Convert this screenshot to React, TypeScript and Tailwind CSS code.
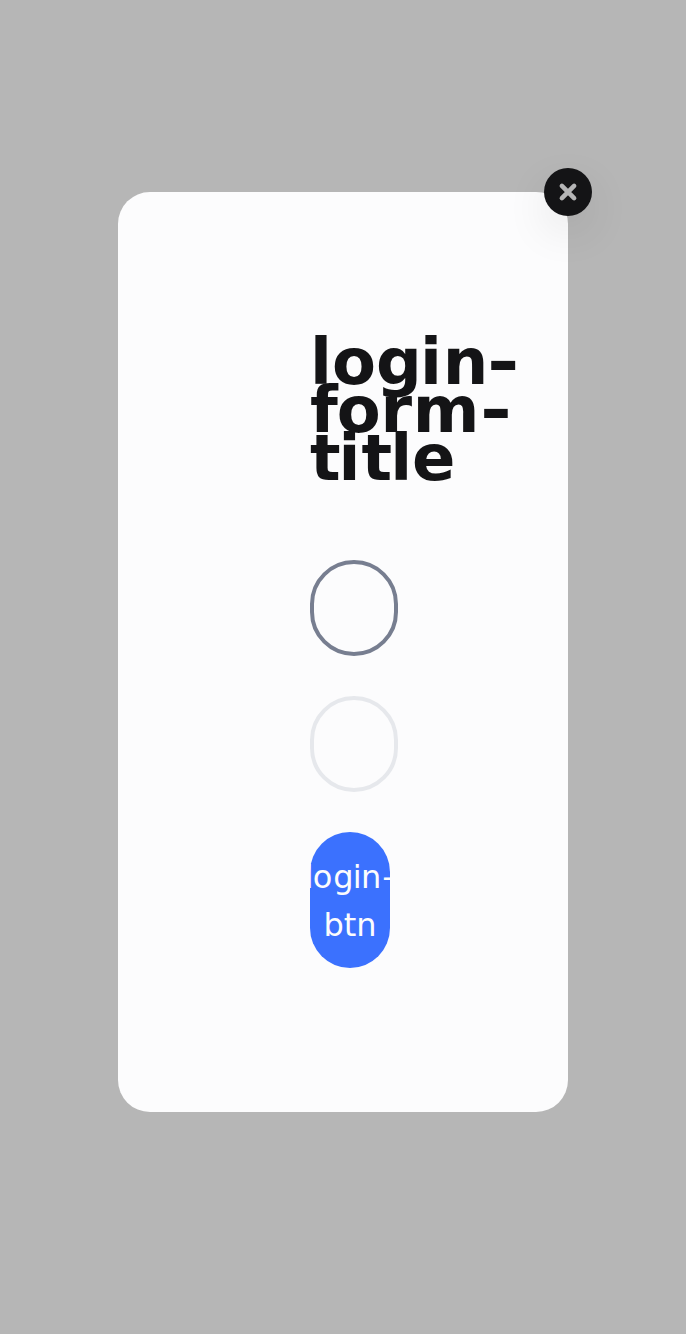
export default function App() {
  return (
    <div className="flex h-[1334px] w-full items-start justify-center bg-[#b6b6b6] pt-48 font-['DejaVu_Sans',sans-serif]">
      <main className="relative h-[920px] w-[450px] rounded-[32px] bg-[#fcfcfd] pt-36 pl-48">
        <button
          type="button"
          aria-label="Close"
          className="absolute -top-6 -right-6 flex size-12 items-center justify-center rounded-full bg-[#141416] shadow-[0_16px_48px_-8px_rgba(15,15,15,0.2)]"
        >
          <svg viewBox="0 0 24 24" className="size-6" fill="none" stroke="#b5b5b6" strokeWidth="4.6" strokeLinecap="round">
            <path d="M5.9 5.9l12.2 12.2M18.1 5.9L5.9 18.1" />
          </svg>
        </button>
        <form className="flex flex-col items-start">
          <h1 className="h-36 pt-0.5 text-[64px] leading-[48px] font-bold text-[#141416]">
            lo<span className="tracking-[-1.7px]">g</span>
            <span className="tracking-[0.7px]">i</span>
            <span className="tracking-[-0.9px]">n</span>
            <span className="inline-block origin-left scale-x-[1.22]">-</span>
            <br />
            <span className="tracking-[-1px]">f</span>
            <span className="tracking-[-0.3px]">o</span>
            <span className="tracking-[0.7px]">r</span>
            <span className="tracking-[0.2px]">m</span>
            <span className="inline-block origin-left scale-x-[1.2]">-</span>
            <br />
            <span className="tracking-[-2px]">t</span>
            <span className="tracking-[1px]">i</span>
            <span className="tracking-[-2px]">t</span>le
          </h1>
          <input
            type="text"
            className="mt-20 h-24 w-[88px] rounded-[48px] border-4 border-[#777e90] px-10 text-[32px] outline-none"
          />
          <input
            type="password"
            className="mt-10 h-24 w-[88px] rounded-[48px] border-4 border-[#e6e8ec] px-10 text-[32px] outline-none"
          />
          <button
            type="button"
            className="mt-10 flex h-[136px] w-20 items-center justify-center rounded-[48px] bg-[#3b71fe] pt-0.5 text-center text-[32px] leading-[48px] text-[#fcfcfd]"
          >
            <span className="whitespace-nowrap">
              <span className="tracking-[-1px]">l</span>
              <span className="tracking-[1.1px]">o</span>
              <span className="tracking-[-1px]">g</span>
              <span className="tracking-[-0.6px]">i</span>
              <span className="tracking-[0.5px]">n</span>
              <span className="inline-block origin-left -translate-y-[0.5px] scale-x-[1.2] pr-[2px]">-</span>
              <br />
              btn
            </span>
          </button>
        </form>
      </main>
    </div>
  );
}
